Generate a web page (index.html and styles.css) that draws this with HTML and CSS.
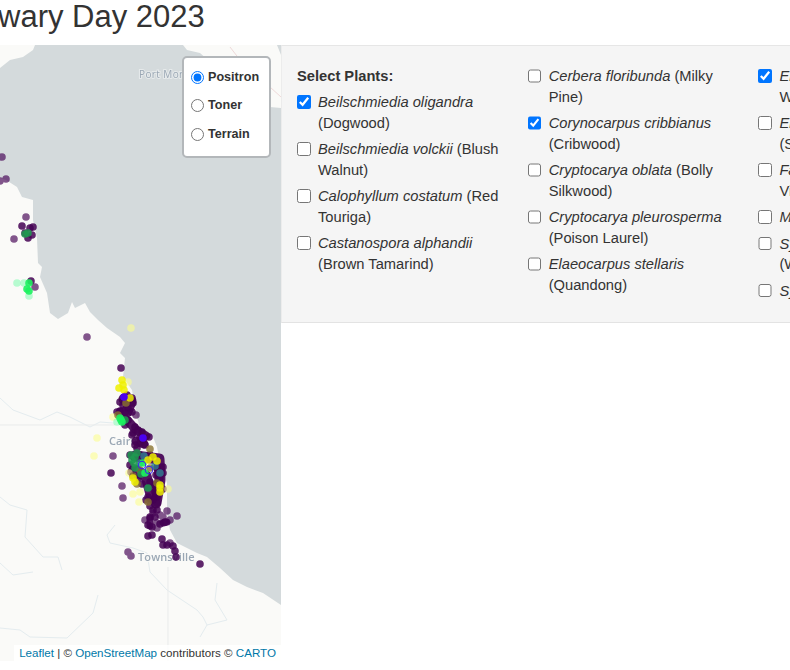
FILE: index.html
```html
<!DOCTYPE html>
<html lang="en">
<head>
<meta charset="utf-8">
<title>Cassowary Day 2023</title>
<link rel="stylesheet" href="styles.css">
</head>
<body>
<h1 class="title">wary Day 2023</h1>
<main class="layout">
  <section class="map">
    <svg class="map-svg" viewBox="0 45 281 616" width="281" height="616">
      <rect class="land" x="0" y="45" width="281" height="616"/>
      <path class="sea" d="M35 45L183 45L187 50L200 53L225 75L250 100L270 107L281 108L281 605L263 593L247 587L233 580L220 568L207 557L197 553L177 543L170 530L167 513L167 497L167 483L160 463L157 447L153 437L140 428L137 417L132 390L123 377L125 358L120 353L125 343L120 337L107 328L98 320L90 312L85 303L75 308L72 302L68 313L58 319L50 313L47 293L40 277L42 267L38 263L37 238L33 220L33 200L22 197L17 187L6 180L0 178L0 68L10 60L23 57L33 50Z"/>
      <path class="sea-gap" d="M277 45L281 55L281 45Z"/>
      <g class="rivers">
        <path d="M0 398L13 410L40 420L57 412L70 417L90 427L100 422L113 423"/>
        <path d="M0 497L10 505L27 510L25 537L43 557L58 557L62 570"/>
        <path d="M0 563L13 575L33 572"/>
        <path d="M115 525L107 535L110 543L133 548L147 553L150 572L167 590L197 610L203 617L207 625L200 637"/>
        <path d="M217 583L215 600L227 620L207 625"/>
        <path d="M0 628L20 630L30 637L67 638L93 613L98 595"/>
      </g>
      <g class="borders">
        <path d="M0 425L115 425"/>
        <path d="M168 567L168 661"/>
      </g>
      <g class="roads">
        <path d="M230 47L240 60"/>
        <path d="M270 87L281 97"/>
      </g>
      <text class="place place-small" x="139" y="78">Port Moresby</text>
      <text class="place" x="109" y="445">Cairns</text>
      <text class="place" x="138" y="561">Townsville</text>
      <g class="blobs">
        <path class="blob-lg" d="M124 399L131 401L127 412L121 413"/>
        <path class="blob-md" d="M128 421L136 430L146 436"/>
        <path class="blob-md" d="M136 441L144 444"/>
        <path class="blob-lg" d="M135 456L159 459L160 480L156 503"/>
        <path class="blob-lg" d="M134 470L146 476L152 498"/>
        <path class="blob-sm" d="M150 518L150 526"/>
        <path class="blob-sm" d="M163 523L167 522"/>
      </g>
      <g class="dots-faint">
        <circle cx="2" cy="157"/><circle cx="6" cy="179"/><circle cx="0" cy="181"/><circle cx="26" cy="217"/><circle cx="14" cy="239"/><circle cx="35" cy="287"/><circle cx="87" cy="337"/><circle cx="136" cy="415"/><circle cx="113" cy="456"/><circle cx="122" cy="486"/><circle cx="123" cy="498"/><circle cx="177" cy="516"/><circle cx="167" cy="511"/><circle cx="160" cy="515"/><circle cx="145" cy="520"/><circle cx="157" cy="523"/><circle cx="170" cy="520"/><circle cx="170" cy="543"/><circle cx="128" cy="552"/><circle cx="131" cy="556"/><circle cx="157" cy="528"/><circle cx="163" cy="517"/><circle cx="153" cy="513"/>
      </g>
      <g class="dots-dark">
        <circle cx="22" cy="226"/><circle cx="33" cy="227"/><circle cx="30" cy="228"/><circle cx="25" cy="233"/><circle cx="28" cy="238"/><circle cx="32" cy="235"/><circle cx="31" cy="281"/><circle cx="121" cy="368"/>
        <circle cx="127" cy="395"/><circle cx="132" cy="398"/><circle cx="120" cy="402"/><circle cx="133" cy="403"/><circle cx="128" cy="408"/><circle cx="120" cy="411"/><circle cx="125" cy="413"/><circle cx="132" cy="412"/><circle cx="117" cy="412"/><circle cx="123" cy="405"/><circle cx="128" cy="400"/>
        <circle cx="128" cy="420"/><circle cx="125" cy="425"/><circle cx="135" cy="427"/><circle cx="133" cy="433"/><circle cx="142" cy="432"/><circle cx="140" cy="437"/><circle cx="149" cy="437"/><circle cx="132" cy="435"/><circle cx="138" cy="430"/><circle cx="143" cy="440"/>
        <circle cx="140" cy="443"/><circle cx="137" cy="448"/><circle cx="145" cy="445"/><circle cx="135" cy="445"/><circle cx="111" cy="473"/>
        <circle cx="130" cy="455"/><circle cx="130" cy="465"/><circle cx="131" cy="472"/><circle cx="140" cy="455"/><circle cx="150" cy="455"/><circle cx="157" cy="468"/><circle cx="163" cy="473"/><circle cx="160" cy="478"/><circle cx="163" cy="467"/><circle cx="156" cy="475"/><circle cx="138" cy="478"/><circle cx="142" cy="484"/><circle cx="150" cy="482"/><circle cx="155" cy="485"/><circle cx="155" cy="492"/><circle cx="163" cy="489"/><circle cx="157" cy="497"/><circle cx="153" cy="500"/><circle cx="148" cy="497"/><circle cx="146" cy="500"/><circle cx="150" cy="506"/><circle cx="157" cy="503"/><circle cx="153" cy="510"/><circle cx="157" cy="510"/>
        <circle cx="150" cy="517"/><circle cx="155" cy="517"/><circle cx="148" cy="525"/><circle cx="152" cy="527"/><circle cx="165" cy="522"/><circle cx="160" cy="524"/><circle cx="148" cy="536"/><circle cx="152" cy="535"/><circle cx="162" cy="539"/><circle cx="163" cy="545"/><circle cx="167" cy="545"/><circle cx="173" cy="546"/><circle cx="175" cy="551"/><circle cx="176" cy="557"/><circle cx="200" cy="564"/>
      </g>
      <g class="dots-pale-yellow">
        <circle cx="131" cy="328"/><circle cx="128" cy="382"/><circle cx="113" cy="417"/><circle cx="97" cy="438"/><circle cx="94" cy="456"/><circle cx="133" cy="494"/><circle cx="139" cy="502"/><circle cx="140" cy="492"/><circle cx="168" cy="489"/><circle cx="129" cy="473"/>
      </g>
      <g class="dots-pale-green">
        <circle cx="17" cy="283"/><circle cx="24" cy="283"/><circle cx="29" cy="296"/><circle cx="117" cy="422"/>
      </g>
      <g class="dots-brown">
        <circle cx="118" cy="415"/><circle cx="126" cy="403"/><circle cx="150" cy="449"/><circle cx="148" cy="502"/><circle cx="133" cy="476"/><circle cx="140" cy="470"/><circle cx="150" cy="468"/><circle cx="137" cy="484"/><circle cx="157" cy="483"/>
      </g>
      <g class="dots-teal">
        <circle cx="144" cy="456"/><circle cx="155" cy="466"/><circle cx="160" cy="473"/><circle cx="140" cy="463"/>
      </g>
      <g class="dots-green">
        <circle cx="28" cy="233"/><circle cx="25" cy="234"/><circle cx="135" cy="457"/><circle cx="132" cy="460"/><circle cx="135" cy="468"/><circle cx="148" cy="488"/><circle cx="134" cy="463"/><circle cx="137" cy="453"/><circle cx="141" cy="474"/><circle cx="131" cy="455"/><circle cx="125" cy="420"/>
      </g>
      <g class="dots-bright">
        <circle cx="29" cy="283"/><circle cx="27" cy="289"/><circle cx="29" cy="291"/><circle cx="121" cy="420"/><circle cx="122" cy="422"/><circle cx="145" cy="473"/><circle cx="143" cy="463"/><circle cx="120" cy="418"/>
      </g>
      <g class="dots-yellow">
        <circle cx="122" cy="380"/><circle cx="123" cy="385"/><circle cx="119" cy="388"/><circle cx="124" cy="390"/><circle cx="130" cy="398"/><circle cx="160" cy="485"/><circle cx="160" cy="488"/><circle cx="160" cy="492"/><circle cx="133" cy="478"/><circle cx="135" cy="482"/><circle cx="157" cy="461"/><circle cx="148" cy="460"/><circle cx="153" cy="457"/>
      </g>
      <g class="dots-blue">
        <circle cx="124" cy="397"/><circle cx="143" cy="438"/>
      </g>
      <g class="dots-ring">
        <circle cx="149" cy="470"/><circle cx="142" cy="465"/>
      </g>
    </svg>
    <form class="layer-control">
      <label class="layer"><input type="radio" name="layer" checked><span>Positron</span></label>
      <label class="layer"><input type="radio" name="layer"><span>Toner</span></label>
      <label class="layer"><input type="radio" name="layer"><span>Terrain</span></label>
    </form>
    <div class="attribution"><a href="#">Leaflet</a> | © <a href="#">OpenStreetMap</a> contributors © <a href="#">CARTO</a></div>
  </section>
  <aside class="side">
    <form class="well">
      <div class="col">
        <div class="heading">Select Plants:</div>
        <label class="plant"><input type="checkbox" checked><span><i>Beilschmiedia oligandra</i> (Dogwood)</span></label>
        <label class="plant"><input type="checkbox"><span><i>Beilschmiedia volckii</i> (Blush Walnut)</span></label>
        <label class="plant"><input type="checkbox"><span><i>Calophyllum costatum</i> (Red Touriga)</span></label>
        <label class="plant"><input type="checkbox"><span><i>Castanospora alphandii</i> (Brown Tamarind)</span></label>
      </div>
      <div class="col">
        <label class="plant"><input type="checkbox"><span><i>Cerbera floribunda</i> (Milky Pine)</span></label>
        <label class="plant"><input type="checkbox" checked><span><i>Corynocarpus cribbianus</i> (Cribwood)</span></label>
        <label class="plant"><input type="checkbox"><span><i>Cryptocarya oblata</i> (Bolly Silkwood)</span></label>
        <label class="plant"><input type="checkbox"><span><i>Cryptocarya pleurosperma</i> (Poison Laurel)</span></label>
        <label class="plant"><input type="checkbox"><span><i>Elaeocarpus stellaris</i> (Quandong)</span></label>
      </div>
      <div class="col">
        <label class="plant"><input type="checkbox" checked><span><i>Endiandra insignis</i> (Hairy Walnut)</span></label>
        <label class="plant"><input type="checkbox"><span><i>Endiandra sieberi</i> (Steelwood)</span></label>
        <label class="plant"><input type="checkbox"><span><i>Faradaya splendida</i> (Glory Vine)</span></label>
        <label class="plant"><input type="checkbox"><span><i>Musa banksii</i></span></label>
        <label class="plant"><input type="checkbox"><span><i>Syzygium gustavioides</i> (Watergum)</span></label>
        <label class="plant"><input type="checkbox"><span><i>Syzygium wilsonii</i></span></label>
      </div>
    </form>
  </aside>
</main>
</body>
</html>
```
FILE: styles.css
```css
html, body {
  margin: 0;
  padding: 0;
  background: #fff;
  overflow: hidden;
}
body {
  width: 790px;
  height: 670px;
  font-family: "Liberation Sans", Arial, sans-serif;
  font-size: 14.7px;
  line-height: 20.9px;
  color: #333;
}
.title {
  margin: 0 0 0 -2px;
  height: 45px;
  font-size: 31px;
  line-height: 34px;
  font-weight: 400;
  white-space: nowrap;
}
.layout {
  display: flex;
  align-items: flex-start;
}
.map {
  position: relative;
  width: 281px;
  height: 616px;
  flex: none;
  overflow: hidden;
}
.map-svg {
  display: block;
  filter: blur(.45px);
}
.land { fill: #fafaf8; }
.sea { fill: #d4dadc; }
.sea-gap { fill: #d4dadc; }
.rivers path { fill: none; stroke: #e4ecef; stroke-width: 1; }
.borders path { fill: none; stroke: #e9ebeb; stroke-width: 1; }
.roads path { fill: none; stroke: #eed9d9; stroke-width: 1; }
.place {
  font-family: "Open Sans", sans-serif;
  font-size: 11px;
  font-weight: 600;
  letter-spacing: .1px;
  fill: #9aa7b4;
  stroke: #fafaf8;
  stroke-width: 2px;
  paint-order: stroke;
}
.place-small { font-size: 10px; font-weight: 500; letter-spacing: .4px; stroke: #e6eaeb; }
.blobs path { fill: none; stroke: #440154; stroke-linecap: round; stroke-linejoin: round; stroke-opacity: .92; }
.blob-lg { stroke-width: 11; }
.blob-md { stroke-width: 9; }
.blob-sm { stroke-width: 7; }
circle { r: 3.8px; }
.dots-faint { fill: #440154; opacity: .66; }
.dots-dark circle { fill: #440154; fill-opacity: .85; }
.dots-pale-yellow circle { fill: #fbfd8f; fill-opacity: .6; }
.dots-pale-green circle { fill: #7dfcae; fill-opacity: .55; }
.dots-brown circle { fill: #8a7330; fill-opacity: .8; }
.dots-teal circle { fill: #2f7f92; fill-opacity: .8; }
.dots-green circle { fill: #1f9a50; fill-opacity: .85; }
.dots-bright circle { fill: #1cf25f; fill-opacity: .9; }
.dots-yellow circle { fill: #eef000; fill-opacity: .85; }
.dots-blue circle { fill: #4a00f0; }
.dots-ring circle { fill: none; stroke: #3a20f0; stroke-width: 1; }
.layer-control {
  position: absolute;
  left: 182px;
  top: 11px;
  box-sizing: border-box;
  width: 89px;
  height: 102px;
  padding: 5px 6px 0 7px;
  background: #fff;
  border: 2px solid #b3b7ba;
  border-radius: 5px;
}
.layer {
  display: flex;
  align-items: center;
  gap: 4px;
  height: 28.5px;
  font-size: 12.6px;
  font-weight: 700;
}
.layer input {
  width: 13px;
  height: 13px;
  margin: 0;
  flex: none;
  accent-color: #0075ff;
}
.attribution {
  position: absolute;
  right: 0;
  bottom: 0;
  height: 16px;
  padding: 0 5px;
  background: rgba(255, 255, 255, .85);
  font-size: 11.6px;
  line-height: 16px;
  white-space: nowrap;
}
.attribution a {
  color: #0078a8;
  text-decoration: none;
}
.side {
  flex: none;
  width: 509px;
  overflow: hidden;
}
.well {
  box-sizing: border-box;
  width: 720px;
  height: 278px;
  margin: 0;
  padding: 20px 0 0 15px;
  display: grid;
  grid-template-columns: repeat(3, 230.7px);
  background: #f5f5f5;
  border-top: 1px solid #e6e6e6;
  border-bottom: 1px solid #e3e3e3;
  border-left: 1px solid #ececec;
}
.col {
  display: flex;
  flex-direction: column;
  align-items: flex-start;
}
.heading {
  font-weight: 700;
  margin-bottom: 5.2px;
}
.plant {
  display: flex;
  gap: 7.5px;
  width: 205px;
  margin-bottom: 5.3px;
}
.plant input {
  width: 13.5px;
  height: 13.5px;
  margin: 3px 0 0;
  flex: none;
  accent-color: #0075ff;
}
```
